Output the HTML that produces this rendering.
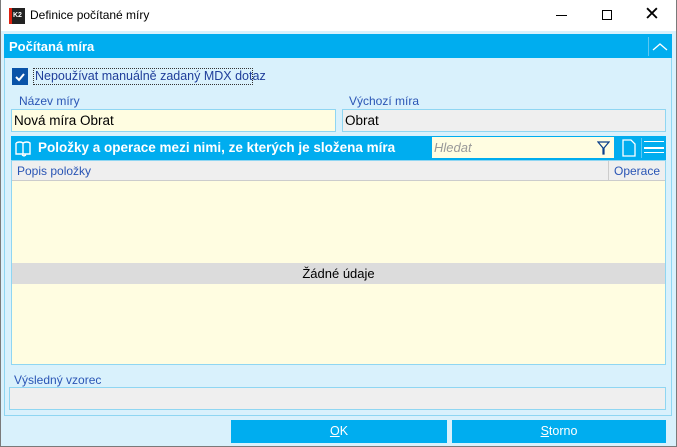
<!DOCTYPE html>
<html><head><meta charset="utf-8"><style>
*{margin:0;padding:0;box-sizing:border-box}
body{width:677px;height:447px;overflow:hidden;font-family:"Liberation Sans",sans-serif;font-size:13px;background:#fff;position:relative}
.a{position:absolute}
</style></head><body>
<div class="a" style="left:0;top:0;width:677px;height:447px;border:1px solid #7a7a7a;border-top:none"></div>
<div class="a" style="left:1px;top:0;width:675px;height:31px;background:#fff"></div>
<div class="a" style="left:9px;top:8px;width:16px;height:16px;background:#222;border-left:3px solid #d21"></div>
<div class="a" style="left:13px;top:12px;font-size:7px;color:#fff;font-weight:bold">K2</div>
<div class="a" style="left:30px;top:8px;font-size:12px;color:#000">Definice počítané míry</div>
<div class="a" style="left:556px;top:15px;width:11px;height:1px;background:#000"></div>
<div class="a" style="left:602px;top:10px;width:10px;height:10px;border:1px solid #000"></div>
<div class="a" style="left:644px;top:3px;font-size:19px;color:#000">✕</div>
<div class="a" style="left:1px;top:31px;width:675px;height:415px;background:#d9f1fc"></div>
<div class="a" style="left:4px;top:34px;width:668px;height:382px;border:1px solid #8fd6f2"></div>
<div class="a" style="left:4px;top:34px;width:668px;height:24px;background:#00adef"></div>
<div class="a" style="left:9px;top:39px;color:#fff;font-weight:bold;font-size:13px">Počítaná míra</div>
<div class="a" style="left:648px;top:37px;width:1px;height:19px;background:#5cc7f2"></div>
<svg class="a" style="left:651px;top:40px" width="18" height="14"><path d="M2 10 L9 4 L16 10" stroke="#fff" fill="none" stroke-width="1.3"/></svg>
<div class="a" style="left:12px;top:68px;width:16px;height:17px;background:#0a53a8"></div>
<svg class="a" style="left:12px;top:68px" width="16" height="17"><path d="M4 9 L7 12 L12 6" stroke="#fff" fill="none" stroke-width="2"/></svg>
<div class="a" style="left:33px;top:68px;width:220px;height:17px;border:1px dotted #333"></div>
<div class="a" style="left:35px;top:69px;color:#1f3e9a;font-size:12.5px">Nepoužívat manuálně zadaný MDX dotaz</div>
<div class="a" style="left:19px;top:94px;color:#2a55b5;font-size:12px">Název míry</div>
<div class="a" style="left:349px;top:94px;color:#2a55b5;font-size:12px">Výchozí míra</div>
<div class="a" style="left:11px;top:109px;width:325px;height:23px;background:#fffde1;border:1px solid #8fd6f2"></div>
<div class="a" style="left:14px;top:113px;font-size:13.5px;color:#000">Nová míra Obrat</div>
<div class="a" style="left:342px;top:109px;width:324px;height:23px;background:#efefef;border:1px solid #8fd6f2"></div>
<div class="a" style="left:345px;top:113px;font-size:13.5px;color:#000">Obrat</div>
<div class="a" style="left:11px;top:136px;width:655px;height:24px;background:#00adef"></div>
<svg class="a" style="left:14px;top:140px" width="20" height="17"><path d="M2 3 L2 14 L9 14 L9 3 Q6 1 2 3 M9 3 Q13 1 16 3 L16 14 L9 14 M8 15 L10 16 L12 15" stroke="#fff" fill="none" stroke-width="1.4"/></svg>
<div class="a" style="left:38px;top:140px;color:#fff;font-weight:bold;font-size:13.5px">Položky a operace mezi nimi, ze kterých je složena míra</div>
<div class="a" style="left:432px;top:137px;width:182px;height:21px;background:#fffde1"></div>
<div class="a" style="left:434px;top:140px;color:#999;font-style:italic;font-size:13px">Hledat</div>
<svg class="a" style="left:597px;top:141px" width="13" height="14"><path d="M1 1 L12 1 L7 7 L7 13 L6 13 L6 7 Z" stroke="#0a3f8a" fill="none" stroke-width="1.2"/></svg>
<svg class="a" style="left:622px;top:139px" width="14" height="18"><path d="M1 1 L9 1 L13 5 L13 17 L1 17 Z" stroke="#fff" fill="none" stroke-width="1.3"/></svg>
<div class="a" style="left:641px;top:138px;width:1px;height:20px;background:#5cc7f2"></div>
<div class="a" style="left:644px;top:141px;width:20px;height:12px;border-top:1.5px solid #fff;border-bottom:1.5px solid #fff"></div>
<div class="a" style="left:644px;top:147px;width:20px;height:1.5px;background:#fff"></div>
<div class="a" style="left:11px;top:160px;width:655px;height:205px;border:1px solid #8fd6f2;background:#fffde1"></div>
<div class="a" style="left:12px;top:161px;width:653px;height:20px;background:#efefef;border-bottom:1px solid #ccc"></div>
<div class="a" style="left:608px;top:161px;width:1px;height:20px;background:#ccc"></div>
<div class="a" style="left:17px;top:164px;color:#2a55b5;font-size:12px">Popis položky</div>
<div class="a" style="left:614px;top:164px;color:#2a55b5;font-size:12px">Operace</div>
<div class="a" style="left:12px;top:263px;width:653px;height:21px;background:#dcdcdc"></div>
<div class="a" style="left:12px;top:266px;width:653px;text-align:center;font-size:13px;color:#000">Žádné údaje</div>
<div class="a" style="left:14px;top:373px;color:#2a55b5;font-size:12px">Výsledný vzorec</div>
<div class="a" style="left:9px;top:387px;width:657px;height:23px;background:#efefef;border:1px solid #8fd6f2"></div>
<div class="a" style="left:231px;top:420px;width:216px;height:23px;background:#00adef;color:#fff;text-align:center;line-height:23px;font-size:12.5px"><u>O</u>K</div>
<div class="a" style="left:452px;top:420px;width:214px;height:23px;background:#00adef;color:#fff;text-align:center;line-height:23px;font-size:12.5px"><u>S</u>torno</div>
</body></html>
